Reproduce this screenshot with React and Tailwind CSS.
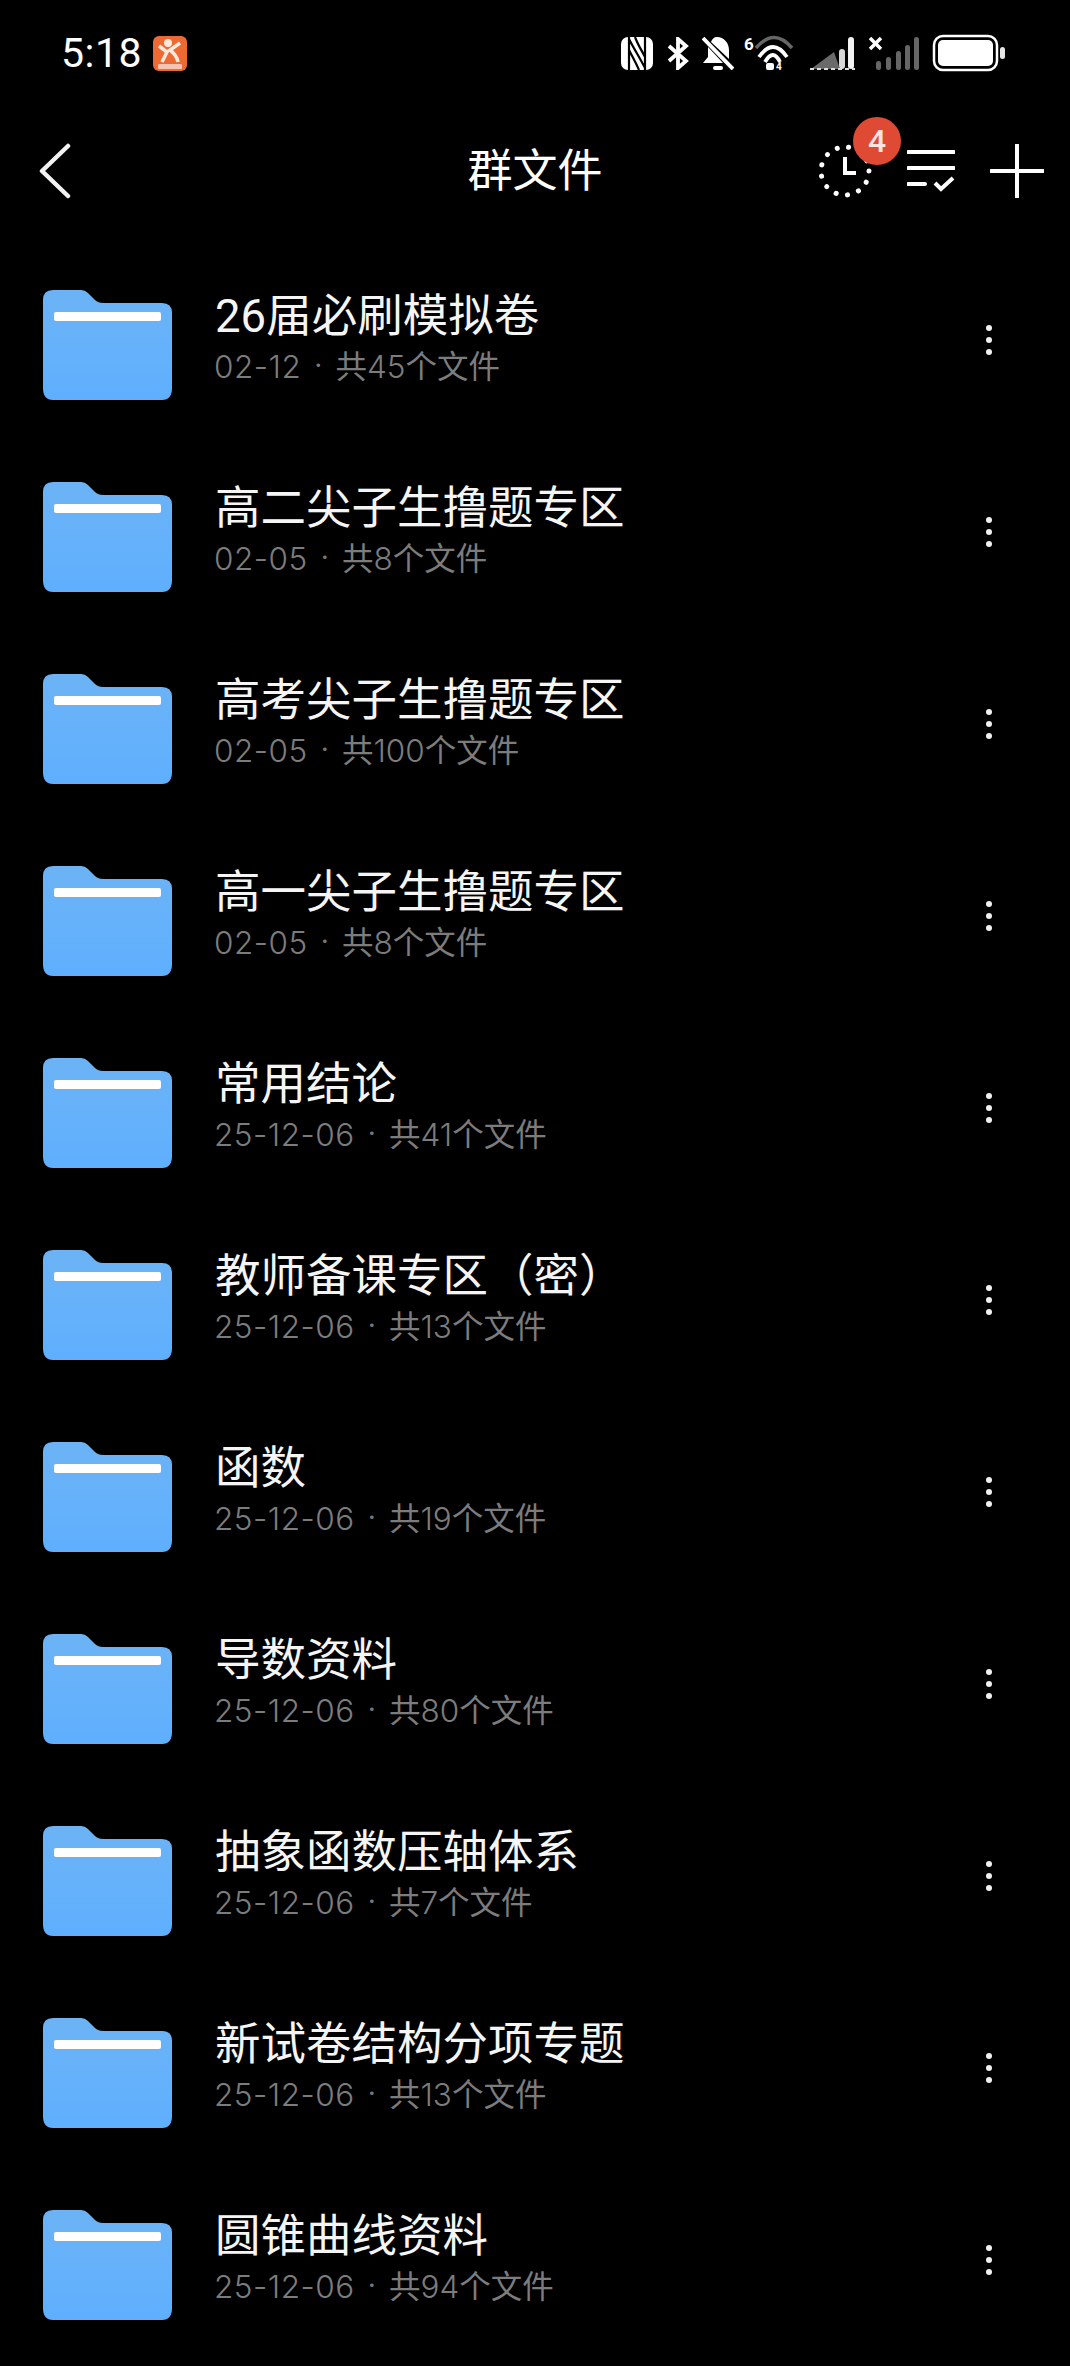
const FONT = "font-['Roboto','Noto_Sans_CJK_SC',sans-serif]"

const FOLDERS = [
  { name: '26届必刷模拟卷', date: '02-12', count: 45 },
  { name: '高二尖子生撸题专区', date: '02-05', count: 8 },
  { name: '高考尖子生撸题专区', date: '02-05', count: 100 },
  { name: '高一尖子生撸题专区', date: '02-05', count: 8 },
  { name: '常用结论', date: '25-12-06', count: 41 },
  { name: '教师备课专区（密）', date: '25-12-06', count: 13 },
  { name: '函数', date: '25-12-06', count: 19 },
  { name: '导数资料', date: '25-12-06', count: 80 },
  { name: '抽象函数压轴体系', date: '25-12-06', count: 7 },
  { name: '新试卷结构分项专题', date: '25-12-06', count: 13 },
  { name: '圆锥曲线资料', date: '25-12-06', count: 94 },
]

function FolderIcon() {
  return (
    <svg width="129" height="110" viewBox="0 0 129 110" className="shrink-0 mt-[9px]">
      <defs>
        <linearGradient id="folderFill" x1="0" y1="0" x2="0" y2="1">
          <stop offset="0" stopColor="#6cb3f5" />
          <stop offset="1" stopColor="#5fafff" />
        </linearGradient>
      </defs>
      <path
        d="M0 10 Q0 0 10 0 H38 Q42 0 45 3 L52 10 Q55 13 60 13 H119 Q129 13 129 23 V98 Q129 110 119 110 H10 Q0 110 0 98 Z"
        fill="url(#folderFill)"
      />
      <rect x="11" y="22" width="107" height="9" rx="2" fill="#fff" />
    </svg>
  )
}

function MoreDots() {
  return (
    <div className="flex flex-col gap-[6px]">
      <span className="w-[6px] h-[6px] rounded-full bg-[#f0f0f0]" />
      <span className="w-[6px] h-[6px] rounded-full bg-[#f0f0f0]" />
      <span className="w-[6px] h-[6px] rounded-full bg-[#f0f0f0]" />
    </div>
  )
}

function StatusIcons() {
  return (
    <div className="flex items-center">
      {/* NFC */}
      <svg width="32" height="33" viewBox="0 0 32 33">
        <rect width="32" height="33" rx="7" fill="#fff" />
        <path d="M8 0V33M24 0V33M8 2C13 12 19 21 24 31M14 0C17 8 21 14 24 20M8 13C11 19 15 26 18 33" stroke="#000" strokeWidth="2.2" fill="none" />
      </svg>
      {/* bluetooth */}
      <svg width="22" height="33" viewBox="0 0 22 33" className="ml-[14px]">
        <path d="M2 9L19 24L11 31V2L19 9L2 24" stroke="#fff" strokeWidth="3.8" fill="none" />
      </svg>
      {/* muted bell */}
      <svg width="32" height="34" viewBox="0 0 32 34" className="ml-[13px]">
        <path d="M15 1C22 1 27 7 27 14V23L9 6C10 3 12 1 15 1ZM6 11L21 27H1L6 21Z" fill="#fff" />
        <path d="M1 2L31 33" stroke="#fff" strokeWidth="3.8" />
        <rect x="11" y="30" width="10" height="4" rx="2" fill="#fff" />
      </svg>
      {/* wifi */}
      <svg width="50" height="36" viewBox="0 0 50 36" className="ml-[10px]">
        <text x="0" y="15" fontSize="17" fontWeight="700" fill="#fff" fontFamily="Roboto">6</text>
        <path d="M12 13Q30 -8 48 13" stroke="#666" strokeWidth="3.5" fill="none" />
        <path d="M15 22Q29 2 43 22M21 27Q29 13 36 27" stroke="#fff" strokeWidth="3.8" fill="none" />
        <rect x="22" y="28" width="8" height="7" rx="2" fill="#fff" />
        <text x="32" y="35" fontSize="10" fontWeight="700" fill="#fff" fontFamily="Roboto">4</text>
      </svg>
      {/* blurred signal */}
      <svg width="46" height="36" viewBox="0 0 46 36" className="ml-[16px]">
        <rect x="38" y="2" width="6" height="32" rx="3" fill="#f2f2f2" />
        <rect x="29" y="14" width="6" height="20" rx="3" fill="#d8d8d8" />
        <path d="M1 34L24 17L30 34Z" fill="#6a6a6a" />
        <path d="M0 34H45" stroke="#ddd" strokeWidth="2" strokeDasharray="4 3" />
      </svg>
      {/* second signal, no service */}
      <svg width="52" height="36" viewBox="0 0 52 36" className="ml-[12px]">
        <path d="M2 3L13 14M13 3L2 14" stroke="#fff" strokeWidth="3.5" />
        <rect x="8" y="26" width="5" height="9" rx="2.5" fill="#666" />
        <rect x="18" y="22" width="5" height="13" rx="2.5" fill="#666" />
        <rect x="28" y="16" width="5" height="19" rx="2.5" fill="#666" />
        <rect x="37" y="10" width="5" height="25" rx="2.5" fill="#666" />
        <rect x="46" y="2" width="5" height="33" rx="2.5" fill="#666" />
      </svg>
      {/* battery */}
      <svg width="73" height="38" viewBox="0 0 73 38" className="ml-[12px]">
        <rect x="2" y="2" width="63" height="34" rx="9" stroke="#fff" strokeWidth="2.5" fill="none" />
        <rect x="6" y="6" width="55" height="26" rx="5" fill="#fff" />
        <rect x="68" y="13" width="5" height="12" rx="2.5" fill="#e6e6e6" />
      </svg>
    </div>
  )
}

function AppBadge() {
  return (
    <svg width="34" height="35" viewBox="0 0 34 35" className="ml-[11px]">
      <rect width="34" height="35" rx="6" fill="#ee6a35" />
      <circle cx="15" cy="7" r="4" fill="#fde9dc" />
      <path d="M6 10L14 16L9 26M27 7L17 14C21 17 24 21 25 26" stroke="#fde9dc" strokeWidth="3.5" fill="none" />
      <rect x="5" y="28" width="24" height="5" rx="1" fill="#f8c4b0" />
    </svg>
  )
}

function RecentIcon() {
  return (
    <svg width="54" height="54" viewBox="0 0 54 54">
      <circle cx="27" cy="27" r="24" stroke="#fff" strokeWidth="5" strokeLinecap="round" strokeDasharray="0.1 11.5" fill="none" />
      <path d="M27 13V29H38" stroke="#fff" strokeWidth="4" fill="none" />
    </svg>
  )
}

function SortIcon() {
  return (
    <svg width="48" height="44" viewBox="0 0 48 44">
      <path d="M1 4H47M1 20H47M1 36H18" stroke="#fff" strokeWidth="4" strokeLinecap="round" fill="none" />
      <path d="M28 35L34 41L46 30" stroke="#fff" strokeWidth="4" fill="none" />
    </svg>
  )
}

function PlusIcon() {
  return (
    <svg width="54" height="54" viewBox="0 0 54 54">
      <path d="M27 1V53M1 27H53" stroke="#fff" strokeWidth="4" strokeLinecap="round" fill="none" />
    </svg>
  )
}

export default function App() {
  return (
    <div className={`w-[1070px] h-[2366px] overflow-hidden bg-black text-white ${FONT}`}>
      <div className="h-[106px] flex items-center justify-between pl-[61px] pr-[65px]">
        <div className="flex items-center">
          <span className="text-[41px] leading-none tracking-[0.5px] text-white">5:18</span>
          <AppBadge />
        </div>
        <StatusIcons />
      </div>

      <div className="h-[130px] grid grid-cols-[1fr_auto_1fr] items-center">
        <div className="pl-[38px] flex">
          <svg width="34" height="56" viewBox="0 0 34 56">
            <path d="M30 3L4 28L30 53" stroke="#f2f2f2" strokeWidth="4.5" strokeLinecap="round" strokeLinejoin="round" fill="none" />
          </svg>
        </div>
        <div className="text-[45px] leading-none">群文件</div>
        <div className="flex items-center justify-end pr-[26px]">
          <div className="relative">
            <RecentIcon />
            <span className="absolute left-[35px] top-[-27px] w-[48px] h-[48px] rounded-full bg-[#df4a35] flex items-center justify-center text-[32px] leading-none font-medium text-[#fbe4df]">
              4
            </span>
          </div>
          <div className="ml-[35px] mt-[-2px]"><SortIcon /></div>
          <div className="ml-[35px]"><PlusIcon /></div>
        </div>
      </div>

      <div className="mt-[8px]">
        {FOLDERS.map((f) => (
          <div key={f.name} className="h-[192px] flex items-center pl-[43px] pr-[78px]">
            <FolderIcon />
            <div className="flex-1 ml-[43px] mt-[-3px]">
              <div className="text-[45.5px] leading-[56px] text-[#f5f5f5]">{f.name}</div>
              <div className="flex text-[31.5px] leading-[40px] mt-[2px] text-[#7c7c7c]">
                <span className="ml-[-1px] tracking-[0.5px] font-['Inter',sans-serif] font-light">{f.date}</span>
                <span className="mx-[13px]">·</span>
                <span>
                  共<span className="font-['Inter',sans-serif] font-light">{f.count}</span>个文件
                </span>
              </div>
            </div>
            <MoreDots />
          </div>
        ))}
      </div>
    </div>
  )
}
